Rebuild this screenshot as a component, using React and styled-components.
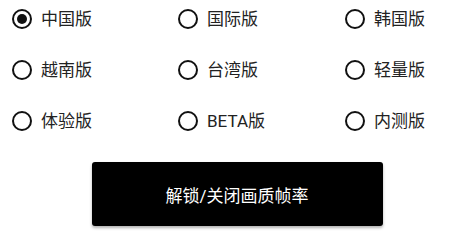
import styled, { createGlobalStyle } from 'styled-components';

const GlobalStyle = createGlobalStyle`
	body {
		margin: 0;
		background: #ffffff;
		font-family: Roboto, "Noto Sans CJK SC", sans-serif;
	}
`;

const versions = ['中国版', '国际版', '韩国版', '越南版', '台湾版', '轻量版', '体验版', 'BETA版', '内测版'];

const App = () => {
	const selected = '中国版';
	return (
		<Page>
			<GlobalStyle />
			<Grid>
				{versions.map((v) => (
					<Option key={v}>
						<Radio checked={v === selected} />
						<Label>{v}</Label>
					</Option>
				))}
			</Grid>
			<ButtonRow>
				<Button>解锁/关闭画质帧率</Button>
			</ButtonRow>
		</Page>
	);
};

export default App;

const Page = styled.div`
	width: 474px;
	height: 236px;
	overflow: hidden;
`;

const Grid = styled.div`
	display: grid;
	grid-template-columns: 166px 167px 1fr;
	row-gap: 31px;
	padding: 9px 0 0 12px;
`;

const Option = styled.div`
	display: flex;
	align-items: center;
	height: 20px;
	gap: 9px;
`;

const Radio = styled.span`
	box-sizing: border-box;
	width: 20px;
	height: 20px;
	border: 2px solid #111;
	border-radius: 50%;
	display: flex;
	align-items: center;
	justify-content: center;
	flex-shrink: 0;

	&::after {
		content: '';
		display: ${(p) => (p.checked ? 'block' : 'none')};
		width: 10px;
		height: 10px;
		border-radius: 50%;
		background: #111;
	}
`;

const Label = styled.span`
	font-size: 17px;
	color: #222;
	line-height: 20px;
`;

const ButtonRow = styled.div`
	display: flex;
	justify-content: center;
	padding-top: 31px;
`;

const Button = styled.button`
	width: 291px;
	height: 64px;
	border: none;
	border-radius: 3px;
	background: #000;
	color: #fff;
	font-family: Roboto, "Noto Sans CJK SC", sans-serif;
	font-size: 17px;
	box-shadow: 0 2px 3px rgba(0, 0, 0, 0.3);
`;
